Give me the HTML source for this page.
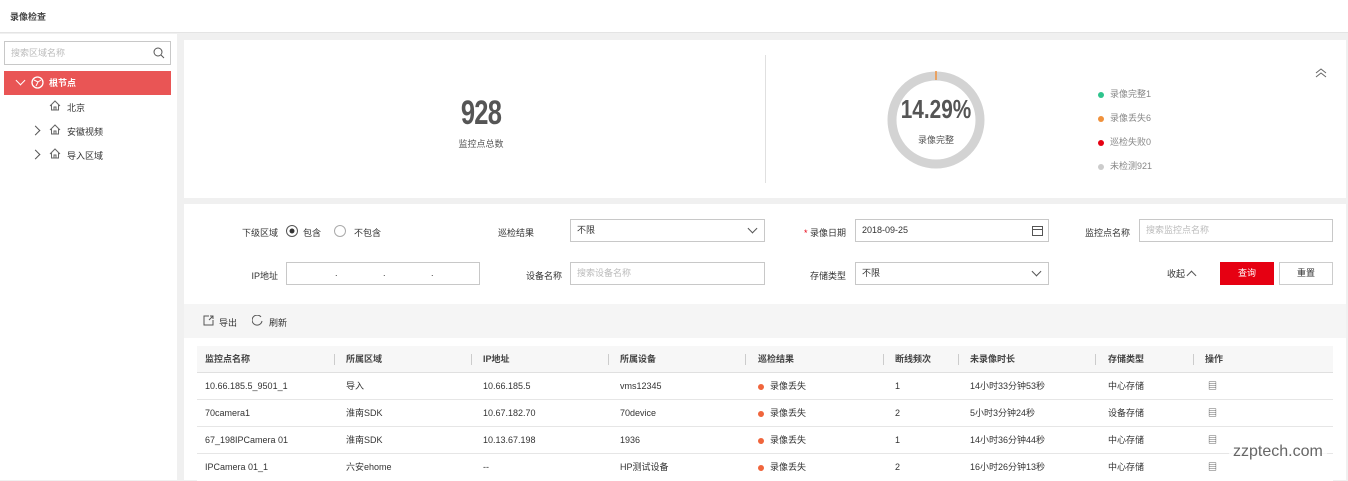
<!DOCTYPE html>
<html><head><meta charset="utf-8"><style>
*{box-sizing:border-box;margin:0;padding:0}
body{width:1348px;height:480px;overflow:hidden;background:#f0f0f0;font-family:"Liberation Sans","Noto Sans CJK SC",sans-serif;font-size:9px;color:#333;position:relative}
.a{position:absolute}
.hdr{left:0;top:0;width:1348px;height:33px;background:#fff;border-bottom:1px solid #e4e4e4}
.side{left:0;top:34px;width:177px;height:446px;background:#fff}
.card{background:#fff}
.inp{position:absolute;height:23px;border:1px solid #c8c8c8;background:#fff;padding-left:6px;line-height:21px;font-size:9px;color:#333}
.ph{color:#bbb}
.lbl{position:absolute;font-size:9px;color:#333;text-align:right}
.chev{position:absolute;width:7px;height:7px;border-right:1px solid #555;border-bottom:1px solid #555;transform:rotate(45deg)}
.row{position:absolute;left:197px;width:1136px;height:27px;border-bottom:1px solid #e6e6e6;background:#fff}
.dot{display:inline-block;width:6px;height:6px;border-radius:50%;margin-right:6px;vertical-align:middle}
</style></head><body>
<div class="a hdr"><div class="a" style="left:10px;top:10px;font-size:9px;font-weight:bold;color:#444">录像检查</div></div>
<div class="a side">
 <div class="a" style="left:4px;top:7px;width:167px;height:24px;border:1px solid #c8c8c8;padding-left:6px;line-height:22px;color:#bbb">搜索区域名称
  <svg class="a" style="right:5px;top:5px" width="12" height="12" viewBox="0 0 12 12"><circle cx="5" cy="5" r="4" fill="none" stroke="#555" stroke-width="1"/><line x1="8" y1="8" x2="11" y2="11" stroke="#555"/></svg></div>
 <div class="a" style="left:4px;top:37px;width:167px;height:24px;background:#e95555;color:#fff;line-height:24px">
  <div class="chev" style="left:13px;top:6px;border-color:#fff"></div>
  <svg class="a" style="left:27px;top:5px" width="13" height="13" viewBox="0 0 13 13"><circle cx="6.5" cy="6.5" r="5.5" fill="none" stroke="#fff" stroke-width="1.3"/><path d="M3 4 L7 6 L5 10 M7 6 L10 4" stroke="#fff" fill="none"/></svg>
  <span class="a" style="left:45px;font-weight:bold">根节点</span></div>
 <svg class="a" style="left:49px;top:66px" width="12" height="11" viewBox="0 0 12 11"><path d="M1 6 L6 1 L11 6 M2.5 5 V10 H9.5 V5 M5 10 V7 H7 V10" fill="none" stroke="#666"/></svg>
 <div class="a" style="left:67px;top:67px">北京</div>
 <div class="chev" style="left:32px;top:93px;transform:rotate(-45deg)"></div>
 <svg class="a" style="left:49px;top:90px" width="12" height="11" viewBox="0 0 12 11"><path d="M1 6 L6 1 L11 6 M2.5 5 V10 H9.5 V5 M5 10 V7 H7 V10" fill="none" stroke="#666"/></svg>
 <div class="a" style="left:67px;top:91px">安徽视频</div>
 <div class="chev" style="left:32px;top:117px;transform:rotate(-45deg)"></div>
 <svg class="a" style="left:49px;top:114px" width="12" height="11" viewBox="0 0 12 11"><path d="M1 6 L6 1 L11 6 M2.5 5 V10 H9.5 V5 M5 10 V7 H7 V10" fill="none" stroke="#666"/></svg>
 <div class="a" style="left:67px;top:115px">导入区域</div>
</div>
<div class="a card" style="left:184px;top:40px;width:1162px;height:158px">
 <div class="a" style="left:0;top:54px;width:594px;text-align:center;font-size:34px;font-weight:bold;color:#555;letter-spacing:-1px;transform:scaleX(.75)">928</div>
 <div class="a" style="left:0;top:97px;width:594px;text-align:center;color:#555">监控点总数</div>
 <div class="a" style="left:581px;top:15px;width:1px;height:128px;background:#e0e0e0"></div>
 <svg class="a" style="left:703px;top:31px" width="98" height="98" viewBox="0 0 98 98"><circle cx="49" cy="49" r="44" fill="none" stroke="#d3d3d3" stroke-width="9"/><line x1="49" y1="0" x2="49" y2="9" stroke="#f0913c" stroke-width="1.5"/></svg>
 <div class="a" style="left:703px;top:54px;width:98px;text-align:center;font-size:26px;font-weight:bold;color:#555;transform:scaleX(.8)">14.29%</div>
 <div class="a" style="left:703px;top:93px;width:98px;text-align:center;color:#555">录像完整</div>
 <div class="a" style="left:914px;top:42px;color:#888;line-height:24px">
  <div><span class="dot" style="background:#2fc48d"></span>录像完整1</div>
  <div><span class="dot" style="background:#f0913c"></span>录像丢失6</div>
  <div><span class="dot" style="background:#e60012"></span>巡检失败0</div>
  <div><span class="dot" style="background:#ccc"></span>未检测921</div>
 </div>
 <svg class="a" style="left:1131px;top:28px" width="12" height="10" viewBox="0 0 12 10"><path d="M1 5 L6 1 L11 5 M1 9 L6 5 L11 9" fill="none" stroke="#666"/></svg>
</div>
<div class="a card" style="left:184px;top:204px;width:1162px;height:276px">
 <div class="lbl" style="left:40px;top:22px;width:54px">下级区域</div>
 <svg class="a" style="left:102px;top:21px" width="12" height="12"><circle cx="6" cy="6" r="5.5" fill="none" stroke="#555"/><circle cx="6" cy="6" r="2.5" fill="#333"/></svg>
 <div class="a" style="left:119px;top:22px">包含</div>
 <svg class="a" style="left:150px;top:21px" width="12" height="12"><circle cx="6" cy="6" r="5.5" fill="none" stroke="#aaa"/></svg>
 <div class="a" style="left:170px;top:22px">不包含</div>
 <div class="lbl" style="left:280px;top:22px;width:70px">巡检结果</div>
 <div class="inp" style="left:386px;top:15px;width:195px">不限<div class="chev" style="right:8px;top:5px"></div></div>
 <div class="lbl" style="left:590px;top:22px;width:72px"><span style="color:#e60012">*</span> 录像日期</div>
 <div class="inp" style="left:671px;top:15px;width:194px">2018-09-25
  <svg class="a" style="right:5px;top:5px" width="11" height="11"><rect x="0.5" y="1.5" width="10" height="9" fill="none" stroke="#555"/><line x1="0" y1="4.5" x2="11" y2="4.5" stroke="#555"/></svg></div>
 <div class="lbl" style="left:880px;top:22px;width:66px">监控点名称</div>
 <div class="inp ph" style="left:955px;top:15px;width:194px">搜索监控点名称</div>
 <div class="lbl" style="left:40px;top:65px;width:54px">IP地址</div>
 <div class="inp" style="left:102px;top:58px;width:194px"><span class="a" style="left:48px">.</span><span class="a" style="left:96px">.</span><span class="a" style="left:144px">.</span></div>
 <div class="lbl" style="left:280px;top:65px;width:98px">设备名称</div>
 <div class="inp ph" style="left:386px;top:58px;width:195px">搜索设备名称</div>
 <div class="lbl" style="left:590px;top:65px;width:72px">存储类型</div>
 <div class="inp" style="left:671px;top:58px;width:194px">不限<div class="chev" style="right:8px;top:5px"></div></div>
 <div class="a" style="left:983px;top:63px">收起</div>
 <div class="chev" style="left:1004px;top:68px;transform:rotate(225deg)"></div>
 <div class="a" style="left:1036px;top:58px;width:54px;height:23px;background:#e60012;color:#fff;text-align:center;line-height:23px">查询</div>
 <div class="a" style="left:1095px;top:58px;width:54px;height:23px;border:1px solid #ccc;text-align:center;line-height:21px">重置</div>
</div>
<div class="a" style="left:184px;top:304px;width:1162px;height:34px;background:#f5f5f5"></div>
<svg class="a" style="left:203px;top:315px" width="11" height="11"><path d="M6 1 H1 V10 H10 V5 M6 5 L10 1 M7 1 H10 V4" fill="none" stroke="#555"/></svg>
<div class="a" style="left:219px;top:316px">导出</div>
<svg class="a" style="left:252px;top:315px" width="11" height="11"><path d="M9 2 A5 5 0 1 0 10 6" fill="none" stroke="#555"/></svg>
<div class="a" style="left:269px;top:316px">刷新</div>
<div class="row" style="top:346px;background:#f7f7f7;border-bottom:1px solid #e0e0e0"></div>
<div class="a" style="top:346px;left:0;width:1348px;height:27px;line-height:27px;font-weight:bold;color:#444">
 <span class="a" style="left:205px">监控点名称</span><span class="a" style="left:346px">所属区域</span><span class="a" style="left:483px">IP地址</span><span class="a" style="left:620px">所属设备</span><span class="a" style="left:758px">巡检结果</span><span class="a" style="left:895px">断线频次</span><span class="a" style="left:970px">未录像时长</span><span class="a" style="left:1108px">存储类型</span><span class="a" style="left:1205px">操作</span>
 <span class="a" style="left:334px;top:8px;width:1px;height:11px;background:#ccc"></span><span class="a" style="left:471px;top:8px;width:1px;height:11px;background:#ccc"></span><span class="a" style="left:608px;top:8px;width:1px;height:11px;background:#ccc"></span><span class="a" style="left:745px;top:8px;width:1px;height:11px;background:#ccc"></span><span class="a" style="left:883px;top:8px;width:1px;height:11px;background:#ccc"></span><span class="a" style="left:958px;top:8px;width:1px;height:11px;background:#ccc"></span><span class="a" style="left:1095px;top:8px;width:1px;height:11px;background:#ccc"></span><span class="a" style="left:1193px;top:8px;width:1px;height:11px;background:#ccc"></span>
</div>
<div class="row" style="top:373px"></div><div class="row" style="top:400px"></div><div class="row" style="top:427px"></div><div class="row" style="top:454px;border:none"></div>
<div class="a" style="top:373px;left:0;width:1348px;height:27px;line-height:27px"><span class="a" style="left:205px">10.66.185.5_9501_1</span><span class="a" style="left:346px">导入</span><span class="a" style="left:483px">10.66.185.5</span><span class="a" style="left:620px">vms12345</span><span class="a" style="left:758px"><span class="dot" style="background:#f0653c"></span>录像丢失</span><span class="a" style="left:895px">1</span><span class="a" style="left:970px">14小时33分钟53秒</span><span class="a" style="left:1108px">中心存储</span><span class="a" style="left:1208px">▤</span></div>
<div class="a" style="top:400px;left:0;width:1348px;height:27px;line-height:27px"><span class="a" style="left:205px">70camera1</span><span class="a" style="left:346px">淮南SDK</span><span class="a" style="left:483px">10.67.182.70</span><span class="a" style="left:620px">70device</span><span class="a" style="left:758px"><span class="dot" style="background:#f0653c"></span>录像丢失</span><span class="a" style="left:895px">2</span><span class="a" style="left:970px">5小时3分钟24秒</span><span class="a" style="left:1108px">设备存储</span><span class="a" style="left:1208px">▤</span></div>
<div class="a" style="top:427px;left:0;width:1348px;height:27px;line-height:27px"><span class="a" style="left:205px">67_198IPCamera 01</span><span class="a" style="left:346px">淮南SDK</span><span class="a" style="left:483px">10.13.67.198</span><span class="a" style="left:620px">1936</span><span class="a" style="left:758px"><span class="dot" style="background:#f0653c"></span>录像丢失</span><span class="a" style="left:895px">1</span><span class="a" style="left:970px">14小时36分钟44秒</span><span class="a" style="left:1108px">中心存储</span><span class="a" style="left:1208px">▤</span></div>
<div class="a" style="top:454px;left:0;width:1348px;height:27px;line-height:27px"><span class="a" style="left:205px">IPCamera 01_1</span><span class="a" style="left:346px">六安ehome</span><span class="a" style="left:483px">--</span><span class="a" style="left:620px">HP测试设备</span><span class="a" style="left:758px"><span class="dot" style="background:#f0653c"></span>录像丢失</span><span class="a" style="left:895px">2</span><span class="a" style="left:970px">16小时26分钟13秒</span><span class="a" style="left:1108px">中心存储</span><span class="a" style="left:1208px">▤</span></div>
<div class="a" style="left:1229px;top:443px;font-size:16px;color:#666;background:rgba(255,255,255,.7);padding:0 4px">zzptech.com</div>
</body></html>
